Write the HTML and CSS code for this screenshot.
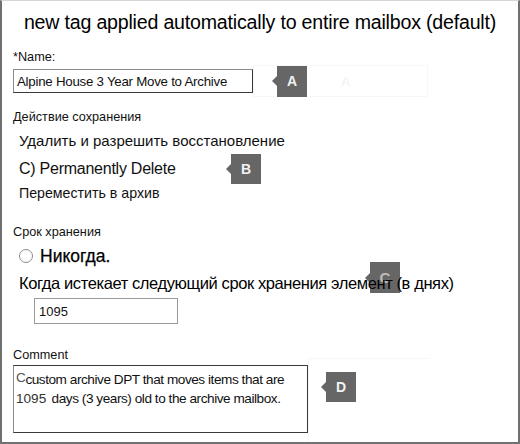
FILE: index.html
```html
<!DOCTYPE html>
<html>
<head>
<meta charset="utf-8">
<link rel="stylesheet" href="styles.css">
</head>
<body>
<div class="frame">
  <h1 class="title">new tag applied automatically to entire mailbox (default)</h1>

  <div class="label label-name">*Name:</div>
  <div class="row row-name">
    <div class="input input-name">Alpine House 3 Year Move to Archive</div>
    <div class="ghost ghost-a">
      <span class="badge badge-a">A</span>
      <span class="ghost-letter">A</span>
    </div>
  </div>

  <div class="label label-action">Действие сохранения</div>
  <div class="option opt-delete-allow">Удалить и разрешить восстановление</div>
  <div class="row row-perm">
    <span class="option opt-perm">C) Permanently Delete</span>
    <span class="badge badge-b">B</span>
  </div>
  <div class="option opt-move">Переместить в архив</div>

  <div class="label label-period">Срок хранения</div>
  <div class="row row-never">
    <span class="radio"></span>
    <span class="never">Никогда.</span>
  </div>
  <div class="when">Когда истекает следующий срок хранения элемент (в днях)</div>
  <div class="input input-days">1095</div>

  <div class="label label-comment">Comment</div>
  <div class="row row-comment">
    <div class="textarea"><span class="cap-c">C</span>custom archive DPT that moves items that are<br><span class="num">1095</span> days (3 years) old to the archive mailbox.</div>
    <div class="ghost ghost-d">
      <span class="badge badge-d">D</span>
    </div>
  </div>

  <span class="badge badge-c">C</span>
</div>
</body>
</html>
```

FILE: styles.css
```css
html, body {
  margin: 0;
  padding: 0;
  background: #ffffff;
}

.frame {
  position: relative;
  width: 520px;
  height: 444px;
  box-sizing: border-box;
  border: 2px solid #707070;
  border-top: 1px solid #d6d6d6;
  padding: 0 0 0 11px;
  font-family: "Liberation Sans", Arial, sans-serif;
  color: #111;
  overflow: hidden;
}

.title {
  margin: 10px 0 0 0;
  padding-right: 11px;
  font-size: 19.6px;
  line-height: 22px;
  font-weight: normal;
  text-align: center;
  color: #000;
  letter-spacing: -0.2px;
  white-space: nowrap;
}

.label {
  font-size: 12.7px;
  line-height: 14px;
  color: #111;
}

.label-name { margin-top: 17px; }
.label-action { margin-top: 13px; }
.label-period { margin-top: 24px; }
.label-comment { margin-top: 24px; }

.row {
  display: flex;
  align-items: center;
}

.row-name {
  margin-top: 1px;
  height: 32px;
}

.input {
  box-sizing: border-box;
  background: #fff;
  font-size: 13px;
  color: #111;
  display: flex;
  align-items: center;
}

.input-name {
  width: 240px;
  height: 24px;
  border: 1px solid #3a3a3a;
  border-left-color: #8a8a8a;
  border-top-color: #8a8a8a;
  padding-left: 3px;
  font-size: 13.3px;
  letter-spacing: -0.25px;
}

.ghost {
  box-sizing: border-box;
  border: 1px solid #f7f7f7;
  display: flex;
  align-items: center;
}

.ghost-a {
  width: 175px;
  height: 32px;
}

.ghost-letter {
  margin-left: 34px;
  font-size: 13px;
  font-weight: bold;
  color: #f4f4f4;
}

.badge {
  position: relative;
  display: flex;
  align-items: center;
  justify-content: center;
  width: 30px;
  height: 31px;
  background: #666666;
  color: #f2f2f2;
  font-size: 14px;
  font-weight: bold;
  flex: none;
}

.badge::before {
  content: "";
  position: absolute;
  left: -5px;
  top: 50%;
  margin-top: -5px;
  border-top: 5px solid transparent;
  border-bottom: 5px solid transparent;
  border-right: 5px solid #666666;
}

.badge-a { margin-left: 23px; }

.option {
  margin-left: 6px;
  color: #111;
}

.opt-delete-allow {
  margin-top: 8px;
  font-size: 15px;
  line-height: 18px;
  letter-spacing: 0;
}

.row-perm {
  margin-top: 4px;
  height: 30px;
}

.opt-perm {
  width: 212px;
  font-size: 16px;
  line-height: 30px;
  letter-spacing: -0.25px;
}

.badge-b { height: 30px; }

.opt-move {
  font-size: 14.2px;
  line-height: 16px;
  margin-top: 1px;
  letter-spacing: 0;
}

.row-never {
  margin-top: 7px;
  margin-left: 6px;
  height: 20px;
}

.radio {
  box-sizing: border-box;
  width: 14px;
  height: 14px;
  border: 1px solid #8c8c8c;
  border-radius: 50%;
  background: #fff;
  margin-right: 7px;
}

.never {
  font-size: 17.5px;
  line-height: 20px;
  color: #000;
  letter-spacing: 0;
  -webkit-text-stroke: 0.25px #000;
}

.when {
  position: relative;
  z-index: 2;
  margin: 8px 0 0 6px;
  font-size: 16.5px;
  line-height: 19px;
  letter-spacing: -0.4px;
  color: #000;
}

.input-days {
  margin: 5px 0 0 21px;
  width: 144px;
  height: 26px;
  border: 1px solid #9a9a9a;
  padding-left: 4px;
  font-size: 13px;
}

.row-comment {
  align-items: flex-start;
  margin-top: 3px;
}

.textarea {
  box-sizing: border-box;
  width: 295px;
  height: 68px;
  border: 1px solid #3a3a3a;
  border-left-color: #8a8a8a;
  padding: 3px 0 0 2px;
  font-size: 13.6px;
  line-height: 18.5px;
  letter-spacing: -0.45px;
  color: #111;
  white-space: nowrap;
}

.cap-c {
  font-size: 13.6px;
  color: #555;
  vertical-align: 2px;
}

.num {
  color: #333;
  letter-spacing: 0;
  margin-right: 2px;
}

.ghost-d {
  width: 122px;
  height: 90px;
  margin-top: -7px;
  align-items: flex-start;
  border-right: none;
  border-bottom: none;
}

.badge-d {
  margin: 13px 0 0 17px;
  height: 30px;
}

.badge-c {
  position: absolute;
  left: 368px;
  top: 261px;
  z-index: 1;
  color: #bdbdbd;
  font-size: 15px;
}
```
